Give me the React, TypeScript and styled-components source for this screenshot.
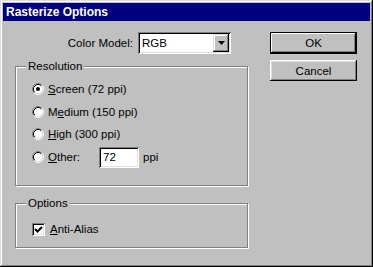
import styled, { createGlobalStyle } from "styled-components";

const GlobalStyle = createGlobalStyle`
  html, body {
    margin: 0;
    padding: 0;
    background: #c0c0c0;
  }
  * {
    box-sizing: border-box;
  }
`;

const Window = styled.div`
  width: 373px;
  height: 267px;
  padding: 3px;
  background: #c0c0c0;
  box-shadow: inset -1px -1px #000, inset 1px 1px #dfdfdf,
    inset -2px -2px #808080, inset 2px 2px #fff;
  display: flex;
  flex-direction: column;
  font-family: "Liberation Sans", Arial, sans-serif;
  font-size: 11.5px;
  color: #000;
`;

const TitleBar = styled.div`
  height: 18px;
  background: #000080;
  color: #fff;
  font-weight: bold;
  font-size: 12px;
  padding-left: 3px;
  display: flex;
  align-items: center;
`;

const Body = styled.div`
  flex: 1;
  display: flex;
  justify-content: space-between;
  padding: 11px 13px 0 12px;
`;

const LeftCol = styled.div`
  width: 233px;
  display: flex;
  flex-direction: column;
`;

const RightCol = styled.div`
  width: 87px;
  display: flex;
  flex-direction: column;
  gap: 6px;
`;

const ColorRow = styled.div`
  height: 22px;
  display: flex;
  align-items: center;
  justify-content: flex-end;
  gap: 5px;
  padding-right: 17px;
`;

const Sunken = styled.div<{ $w: number; $h: number }>`
  width: ${(p) => p.$w}px;
  height: ${(p) => p.$h}px;
  background: #fff;
  box-shadow: inset 1px 1px #808080, inset -1px -1px #fff, inset 2px 2px #000,
    inset -2px -2px #dfdfdf;
  padding: 2px 2px 2px 4px;
  display: flex;
  align-items: center;
`;

const ArrowBtn = styled.div`
  margin-left: auto;
  width: 16px;
  height: 18px;
  background: #c0c0c0;
  box-shadow: inset -1px -1px #000, inset 1px 1px #dfdfdf,
    inset -2px -2px #808080, inset 2px 2px #fff;
  display: flex;
  align-items: center;
  justify-content: center;
`;

const Group = styled.div<{ $h: number; $top: number; $pt: number }>`
  position: relative;
  height: ${(p) => p.$h}px;
  margin-top: ${(p) => p.$top}px;
  padding: ${(p) => p.$pt}px 0 0 16px;
  border: 1px solid #808080;
  box-shadow: inset 1px 1px #fff, 1px 1px #fff;
  display: flex;
  flex-direction: column;
  gap: 0.7px;
`;

const Legend = styled.span`
  position: absolute;
  top: -8px;
  left: 10px;
  line-height: 14px;
  padding: 0 2px;
  background: #c0c0c0;
`;

const OptionRow = styled.div`
  height: 22px;
  display: flex;
  align-items: center;
`;

const RadioLabel = styled.span<{ $w?: number }>`
  margin-left: 4px;
  width: ${(p) => (p.$w ? `${p.$w}px` : "auto")};
`;

const CheckBox = styled.div`
  width: 13px;
  height: 13px;
  background: #fff;
  box-shadow: inset 1px 1px #808080, inset -1px -1px #fff, inset 2px 2px #000,
    inset -2px -2px #dfdfdf;
  display: flex;
  align-items: center;
  justify-content: center;
`;

const CheckLabel = styled.span`
  margin-left: 5px;
`;

const Unit = styled.span`
  margin-left: 4px;
`;

const U = styled.span`
  text-decoration: underline;
`;

const Button = styled.div<{ $default?: boolean; $h: number }>`
  height: ${(p) => p.$h}px;
  display: flex;
  align-items: center;
  justify-content: center;
  background: #c0c0c0;
  box-shadow: ${(p) =>
    p.$default
      ? "inset 0 0 0 1px #000, inset -2px -2px #000, inset 2px 2px #fff, inset -3px -3px #808080"
      : "inset -1px -1px #000, inset 1px 1px #fff, inset -2px -2px #808080, inset 2px 2px #dfdfdf"};
`;

function Radio({ checked }: { checked?: boolean }) {
  return (
    <svg width="12" height="12" viewBox="0 0 12 12">
      <circle cx="6" cy="6" r="4.5" fill="#fff" />
      <path d="M2.11 9.89 A5.5 5.5 0 0 1 9.89 2.11" stroke="#808080" fill="none" />
      <path d="M9.89 2.11 A5.5 5.5 0 0 1 2.11 9.89" stroke="#fff" fill="none" />
      <path d="M2.82 9.18 A4.5 4.5 0 0 1 9.18 2.82" stroke="#000" fill="none" />
      <path d="M9.18 2.82 A4.5 4.5 0 0 1 2.82 9.18" stroke="#dfdfdf" fill="none" />
      {checked && <circle cx="6" cy="6" r="2" fill="#000" />}
    </svg>
  );
}

export default function App() {
  return (
    <>
      <GlobalStyle />
      <Window>
        <TitleBar>Rasterize Options</TitleBar>
        <Body>
          <LeftCol>
            <ColorRow>
              <span>Color Model:</span>
              <Sunken $w={93} $h={22}>
                RGB
                <ArrowBtn>
                  <svg width="7" height="4" viewBox="0 0 7 4">
                    <path d="M0 0 H7 L3.5 4 Z" fill="#000" />
                  </svg>
                </ArrowBtn>
              </Sunken>
            </ColorRow>
            <Group $h={120} $top={12} $pt={11}>
              <Legend>Resolution</Legend>
              <OptionRow>
                <Radio checked />
                <RadioLabel>
                  <U>S</U>creen (72 ppi)
                </RadioLabel>
              </OptionRow>
              <OptionRow>
                <Radio />
                <RadioLabel>
                  M<U>e</U>dium (150 ppi)
                </RadioLabel>
              </OptionRow>
              <OptionRow>
                <Radio />
                <RadioLabel>
                  <U>H</U>igh (300 ppi)
                </RadioLabel>
              </OptionRow>
              <OptionRow>
                <Radio />
                <RadioLabel $w={51}>
                  <U>O</U>ther:
                </RadioLabel>
                <Sunken $w={40} $h={21}>
                  72
                </Sunken>
                <Unit>ppi</Unit>
              </OptionRow>
            </Group>
            <Group $h={45} $top={17} $pt={14}>
              <Legend>Options</Legend>
              <OptionRow>
                <CheckBox>
                  <svg width="9" height="9" viewBox="0 0 9 9">
                    <path d="M1 4 L3.5 6.5 L8 2" stroke="#000" strokeWidth="2" fill="none" />
                  </svg>
                </CheckBox>
                <CheckLabel>
                  <U>A</U>nti-Alias
                </CheckLabel>
              </OptionRow>
            </Group>
          </LeftCol>
          <RightCol>
            <Button $default $h={22}>
              OK
            </Button>
            <Button $h={21}>Cancel</Button>
          </RightCol>
        </Body>
      </Window>
    </>
  );
}
